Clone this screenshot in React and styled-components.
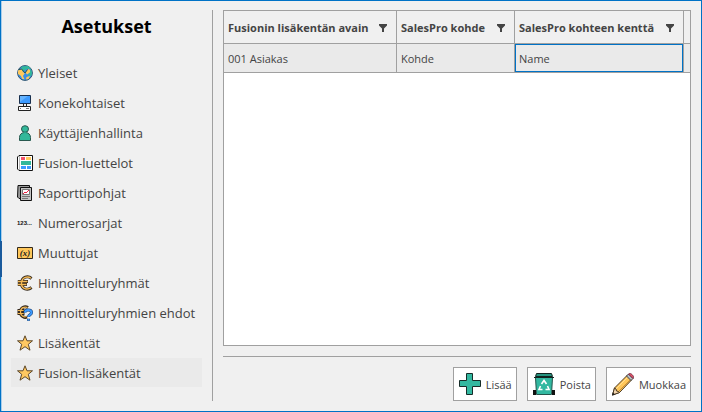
import React, { useState } from 'react'
import styled, { createGlobalStyle } from 'styled-components'

const GlobalStyle = createGlobalStyle`
    * {
        box-sizing: border-box;
    }
    body {
        margin: 0;
        background: #f0f0f0;
        color: #444;
        font-family: "Open Sans", "Noto Sans", sans-serif;
        font-size: 11px;
    }
`

const GlobeIcon = () => (
    <svg width="16" height="16" viewBox="0 0 16 16" aria-hidden="true">
        <circle cx="8" cy="8" r="7.4" fill="#3a8fe8" stroke="#33566e" />
        <path d="M4.500 1.500L11 1l3 2.500L9.500 4 6 6 4.500 5z" fill="#32b89a" />
        <path d="M1 5.500L4.500 4l1.500 3 1.800 1.200L6 11l1.500 3.500-2.500-.8L4 11 1 9z" fill="#ffc95c" />
        <path d="M8.500 7.500L11 4l2.500 1-.5 2.500L10 9.500z" fill="#ffc95c" />
        <path d="M13 3.500l2 3.500-.5 3.500-2.500 1-1-1.500 2-2.500z" fill="#32b89a" />
        <path d="M9.500 12l3.500-1-1.500 3-2.500.6z" fill="#ffc95c" />
        <path d="M2 4.500l2.500-.5 3.500 4 2.500-3.500" fill="none" stroke="#27564f" />
    </svg>
)

const ComputerIcon = () => (
    <svg width="16" height="16" viewBox="0 0 16 16" aria-hidden="true">
        <path d="M2.500.5h11v8h-11z" fill="#3d9bff" stroke="#182f4d" />
        <path d="M3 1h8L3 7z" fill="#65b4ff" />
        <path d="M6.500 9v2M9.500 9v2" stroke="#222" />
        <path d="M1.500 11.500h12v4h-12z" fill="#fff" stroke="#222" />
        <path d="M3 13.500h1M9 13.500h3" stroke="#777" />
    </svg>
)

const UserIcon = () => (
    <svg width="16" height="16" viewBox="0 0 16 16" aria-hidden="true">
        <path d="M2.500 15.500v-3C2.500 9.500 4.500 7.500 8 7.500s5.500 2 5.500 5v3z" fill="#32b89a" stroke="#28584f" />
        <ellipse cx="8" cy="4" rx="3.500" ry="3.300" fill="#32b89a" stroke="#28584f" />
        <path d="M6.500 7.300h3v1.400h-3z" fill="#32b89a" />
    </svg>
)

const ListIcon = () => (
    <svg width="16" height="16" viewBox="0 0 16 16" aria-hidden="true">
        <path d="M2 .5h13.500v15H2L.5 14V2z" fill="#fff" stroke="#111" />
        <path d="M2.500 1v14" stroke="#bbb" />
        <path d="M4 2h4v3H4z" fill="#f2536b" />
        <path d="M9 2h5v3H9z" fill="#ffc95c" />
        <path d="M4 6h10v4H4z" fill="#32b89a" />
        <path d="M4 11h5v3H4zM10 11h4v3h-4z" fill="#3d9bff" />
    </svg>
)

const ReportIcon = () => (
    <svg width="16" height="16" viewBox="0 0 16 16" aria-hidden="true">
        <path d="M1 .5h11.500v13H2L.5 12z" fill="#999" stroke="#111" />
        <path d="M3.500 2.500h11v13h-11z" fill="#c4c4c4" stroke="#111" />
        <path d="M5.500 4.500h7v5h-7z" fill="#fff" stroke="#777" />
        <path d="M6 9l2-2 1 1 3-3" fill="none" stroke="#e24" />
        <path d="M5 11.500h8M5 13.500h6" stroke="#777" />
    </svg>
)

const NumbersIcon = () => (
    <svg width="16" height="16" viewBox="0 0 16 16" aria-hidden="true">
        <text x="0" y="10" fill="#111" fontFamily="Liberation Sans, sans-serif" fontSize="6" fontWeight="700">123...</text>
    </svg>
)

const VariableIcon = () => (
    <svg width="16" height="16" viewBox="0 0 16 16" aria-hidden="true">
        <path d="M.5 2.500h15v11H.5z" fill="#ffc75a" stroke="#33291a" />
        <text x="8" y="11" textAnchor="middle" fill="#222" fontFamily="Liberation Serif, serif" fontSize="9" fontStyle="italic" fontWeight="700">(x)</text>
    </svg>
)

const EuroIcon = () => (
    <svg width="16" height="16" viewBox="0 0 16 16" aria-hidden="true">
        <g fill="none" strokeLinejoin="round">
            <path d="M14.500 3.500C11 .5 5 1.500 4.500 8s6.500 7.500 10 4.500M.8 6.500H11M.8 9.500H10" stroke="#35291c" strokeWidth="3" />
            <path d="M14 3.300C10.800.8 5 2 4.500 8s6 7.200 9.500 4.700M1 6.500h9.500M1 9.500h8.500" stroke="#f3b955" strokeWidth="1.400" />
        </g>
    </svg>
)

const EuroHelpIcon = () => (
    <svg width="16" height="16" viewBox="0 0 16 16" aria-hidden="true">
        <g fill="none">
            <path d="M11 2.500C8 .8 3.500 2 3.500 7s4.500 6 6.500 5M.5 5.500h7M.5 8.500h7" stroke="#35291c" strokeWidth="3" />
            <path d="M10.500 2.500C7.500 1.300 3.500 2.500 3.500 7s4 5.500 6 4.500M.7 5.500h6M.7 8.500h6" stroke="#f3b955" strokeWidth="1.200" />
            <path d="M8 7.500c0-3.500 6.500-3.500 6.500 0 0 2.500-3 2-3 4.500M11.500 13.700v2" stroke="#173c6e" strokeWidth="3" />
            <path d="M8 7.500c0-3.500 6.500-3.500 6.500 0 0 2.500-3 2-3 4.500M11.500 14v1.500" stroke="#3d9bff" strokeWidth="2" />
        </g>
    </svg>
)

const StarIcon = () => (
    <svg width="16" height="16" viewBox="0 0 16 16" aria-hidden="true">
        <path d="M8 .8l2 5h5.500l-4.200 3.500 1.700 5.900L8 11.700l-5 3.500 1.700-5.900L.5 5.800H6z" fill="#ffc861" stroke="#5d482b" />
    </svg>
)

const FilterIcon = () => (
    <svg width="8" height="8" viewBox="0 0 8 8" aria-hidden="true">
        <path d="M0 0h8v1.500L5 4.500V8H3V4.500L0 1.500z" fill="#444" />
    </svg>
)

const PlusIcon = () => (
    <svg width="24" height="24" viewBox="0 0 24 24" aria-hidden="true">
        <path d="M8.500 1.500h6v7h8v6h-8v8h-6v-8h-7v-6h7z" fill="#32b8a0" stroke="#162c28" />
    </svg>
)

const BinIcon = () => (
    <svg width="24" height="24" viewBox="0 0 24 24" aria-hidden="true">
        <path d="M3.500 5.500h17l-1 17h-15z" fill="#32b8a0" stroke="#24544b" />
        <path d="M4.500 1.500h15l1 3h-17z" fill="#25937f" stroke="#10231f" />
        <path d="M2 5.500h20" stroke="#10231f" />
        <path d="M1 18h3v5H1zM20 18h3v5h-3z" fill="#111" />
        <path d="M9.500 12l2.500-3.500 2.500 3.500M15.500 14l1.500 3.500h-3.500M10.500 17.500H7L8.500 14" fill="none" stroke="#fff" strokeWidth="1.600" />
    </svg>
)

const PencilIcon = () => (
    <svg width="24" height="24" viewBox="0 0 24 24" aria-hidden="true">
        <path d="M1.500 23l2-7L16 3.500l4.500 4.500L8.500 20.500z" fill="#ffc75a" stroke="#4a3820" />
        <path d="M5 17L17.500 4.500" stroke="#ffdf97" />
        <path d="M7.500 19.500L20 7" stroke="#ca8d35" />
        <path d="M1.500 23l2-7 1.500 1 .5 2 2 .5 1 1z" fill="#f3d5ae" stroke="#4a3820" />
        <path d="M1 23.500l1-3L4 22.500z" fill="#222" />
        <path d="M15.500 4l2-2 4.500 4.500-2 2z" fill="#b8c0c5" stroke="#444" />
        <path d="M17.500 2c2-2 6.500 2.500 4.500 4.500z" fill="#ef536b" stroke="#753044" />
    </svg>
)

const pages = [
    { name: 'Yleiset', Icon: GlobeIcon },
    { name: 'Konekohtaiset', Icon: ComputerIcon },
    { name: 'Käyttäjienhallinta', Icon: UserIcon },
    { name: 'Fusion-luettelot', Icon: ListIcon },
    { name: 'Raporttipohjat', Icon: ReportIcon },
    { name: 'Numerosarjat', Icon: NumbersIcon },
    { name: 'Muuttujat', Icon: VariableIcon },
    { name: 'Hinnoitteluryhmät', Icon: EuroIcon },
    { name: 'Hinnoitteluryhmien ehdot', Icon: EuroHelpIcon },
    { name: 'Lisäkentät', Icon: StarIcon },
    { name: 'Fusion-lisäkentät', Icon: StarIcon },
]

const columns = [
    { title: 'Fusionin lisäkentän avain', width: 173 },
    { title: 'SalesPro kohde', width: 118 },
    { title: 'SalesPro kohteen kenttä', width: 169 },
]

const rows = [['001 Asiakas', 'Kohde', 'Name']]

function App() {
    const [page, setPage] = useState('Fusion-lisäkentät')
    const [cell, setCell] = useState('Name')

    return (
        <>
            <GlobalStyle />
            <Window>
                <EdgeMark />
                <Sidebar>
                    <Title>Asetukset</Title>
                    <Nav>
                        {pages.map(({ name, Icon }) => (
                            <NavLink key={name} href="#" $active={name === page} onClick={() => setPage(name)}>
                                <Icon />
                                {name}
                            </NavLink>
                        ))}
                    </Nav>
                </Sidebar>
                <Main>
                    <GridBox>
                        <Table>
                            <colgroup>
                                {columns.map((c) => <Col key={c.title} $width={c.width} />)}
                                <col />
                            </colgroup>
                            <thead>
                                <tr>
                                    {columns.map((c) => (
                                        <Th key={c.title}>
                                            <HeadCell>
                                                {c.title}
                                                <FilterButton aria-label={c.title}><FilterIcon /></FilterButton>
                                            </HeadCell>
                                        </Th>
                                    ))}
                                    <Rest />
                                </tr>
                            </thead>
                            <tbody>
                                {rows.map((row) => (
                                    <tr key={row[0]}>
                                        {row.map((value) => (
                                            <Td key={value} $active={value === cell} onClick={() => setCell(value)}>{value}</Td>
                                        ))}
                                        <Rest $filled />
                                    </tr>
                                ))}
                            </tbody>
                        </Table>
                    </GridBox>
                    <Footer>
                        <Button><PlusIcon />Lisää</Button>
                        <Button><BinIcon />Poista</Button>
                        <Button><PencilIcon />Muokkaa</Button>
                    </Footer>
                </Main>
            </Window>
        </>
    )
}

const Window = styled.div`
    position: relative;
    display: flex;
    min-height: 100vh;
    padding: 9px 10px 10px;
    border: 1px solid #0072c6;
    box-shadow: inset 1px 0 0 #a9cdea;
`

const EdgeMark = styled.span`
    position: absolute;
    top: 240px;
    left: -1px;
    width: 2px;
    height: 36px;
    background: #1a5a9c;
`

const Sidebar = styled.aside`
    flex: none;
    width: 202px;
    padding-right: 10px;
    border-right: 1px solid #a0a0a0;
`

const Title = styled.h1`
    margin: 0;
    padding-bottom: 16px;
    font-size: 18px;
    font-weight: 700;
    line-height: 32px;
    color: #000;
    text-align: center;
`

const Nav = styled.nav`
    display: flex;
    flex-direction: column;
    gap: 1px;
`

const NavLink = styled.a`
    display: flex;
    align-items: center;
    gap: 5px;
    height: 29px;
    padding: 0 6px;
    background: ${(p) => (p.$active ? '#eaeaea' : 'transparent')};
    color: #444;
    font-size: 13px;
    white-space: nowrap;
    text-decoration: none;

    svg {
        flex: none;
    }
`

const Main = styled.main`
    display: flex;
    flex: 1;
    flex-direction: column;
    gap: 10px;
    min-width: 0;
    padding-left: 10px;
`

const GridBox = styled.div`
    flex: 1;
    border: 1px solid #a0a0a0;
    background: #fff;
`

const Table = styled.table`
    width: 100%;
    border-spacing: 0;
    table-layout: fixed;
`

const Col = styled.col`
    width: ${(p) => p.$width}px;
`

const Th = styled.th`
    height: 33px;
    padding: 0 9px 0 4px;
    border: solid #a0a0a0;
    border-width: 0 1px 1px 0;
    background: #f0f0f0;
    font-weight: 700;
    text-align: left;
    white-space: nowrap;
`

const HeadCell = styled.div`
    display: flex;
    align-items: center;
    justify-content: space-between;
`

const FilterButton = styled.button`
    display: flex;
    padding: 1px 0 0;
    border: 0;
    background: none;
`

const Td = styled.td`
    height: 29px;
    padding: 0 4px;
    border: solid #a0a0a0;
    border-width: 0 1px 1px 0;
    background: #eaeaea;
    background-clip: padding-box;
    box-shadow: ${(p) => (p.$active ? 'inset 0 0 0 1px #0072c6' : 'none')};
`

const Rest = styled.td`
    padding: 0;
    border-bottom: 1px solid #a0a0a0;
    background: ${(p) => (p.$filled ? '#eaeaea' : '#f0f0f0')};
`

const Footer = styled.footer`
    display: flex;
    justify-content: flex-end;
    gap: 10px;
    padding-top: 10px;
    border-top: 1px solid #a0a0a0;
`

const Button = styled.button`
    display: flex;
    align-items: center;
    gap: 4px;
    height: 34px;
    padding: 0 4px;
    border: 1px solid #a0a0a0;
    background: #fff;
    color: #444;
    font: inherit;
`

export default App
